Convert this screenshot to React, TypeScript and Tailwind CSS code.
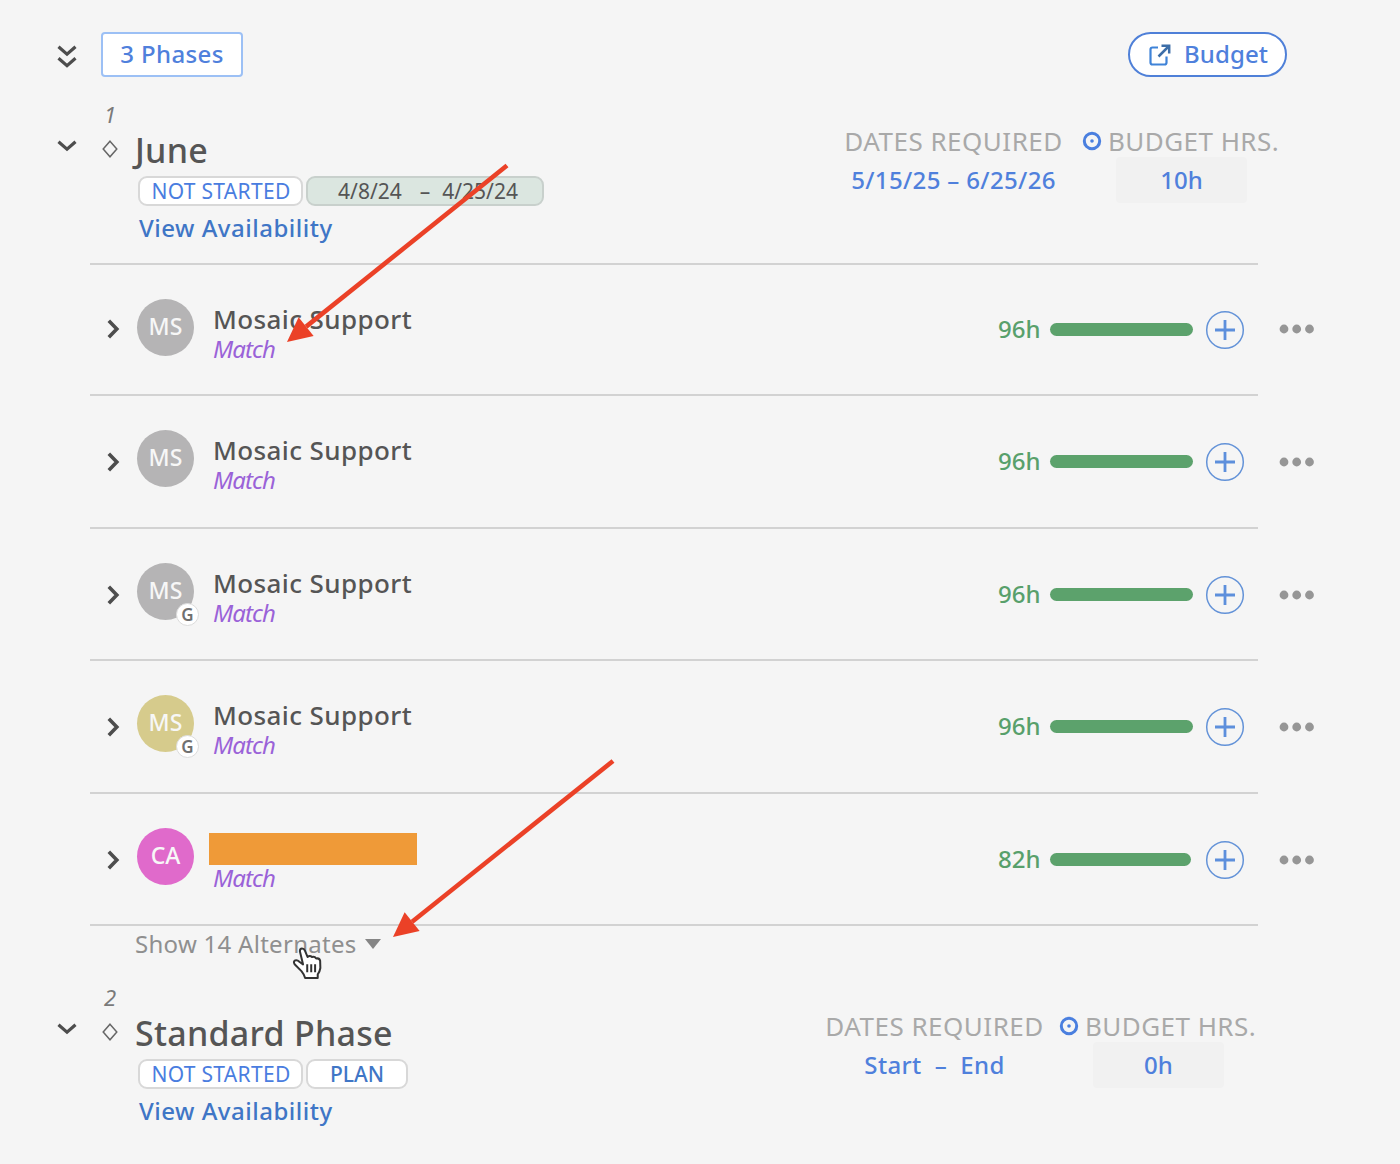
import { useState } from "react";

interface Member {
  id: number;
  initials: string;
  name: string | null;
  avatar: string;
  guest: boolean;
  hours: number;
  barWidth: number;
  height: string;
}

const members: Member[] = [
  { id: 1, initials: "MS", name: "Mosaic Support", avatar: "bg-[#b5b4b5]", guest: false, hours: 96, barWidth: 143, height: "h-[131px]" },
  { id: 2, initials: "MS", name: "Mosaic Support", avatar: "bg-[#b5b4b5]", guest: false, hours: 96, barWidth: 143, height: "h-[133px]" },
  { id: 3, initials: "MS", name: "Mosaic Support", avatar: "bg-[#b5b4b5]", guest: true, hours: 96, barWidth: 143, height: "h-[132px]" },
  { id: 4, initials: "MS", name: "Mosaic Support", avatar: "bg-[#d6cb8c]", guest: true, hours: 96, barWidth: 143, height: "h-[133px]" },
  { id: 5, initials: "CA", name: null, avatar: "bg-[#e06acb]", guest: false, hours: 82, barWidth: 141, height: "h-[132px]" },
];

function ChevronDown() {
  return (
    <svg width="20" height="12" viewBox="0 0 20 12" fill="none" stroke="#4d4d4d" strokeWidth="3.2">
      <path d="M1.5 1.8 L10 9.2 L18.5 1.8" />
    </svg>
  );
}

function ChevronRight() {
  return (
    <svg width="13" height="20" viewBox="0 0 13 20" fill="none" stroke="#4d4d4d" strokeWidth="3.6">
      <path d="M1.8 1.8 L9.8 10 L1.8 18.2" />
    </svg>
  );
}

function Diamond() {
  return (
    <svg width="16" height="18" viewBox="0 0 16 18" fill="none" stroke="#666" strokeWidth="1.5">
      <path d="M8 1.2 L14.8 9 L8 16.8 L1.2 9 Z" />
    </svg>
  );
}

function PlusCircle() {
  return (
    <svg className="mt-px" width="40" height="40" viewBox="0 0 40 40" fill="none">
      <circle cx="20" cy="20" r="18.3" stroke="#6493d8" strokeWidth="1.5" />
      <path d="M20 10 V30 M10 20 H30" stroke="#5d8fdc" strokeWidth="2.8" />
    </svg>
  );
}

function MemberRow({ member, first }: { member: Member; first: boolean }) {
  return (
    <div className={`flex ${member.height}`}>
      <div className="flex w-[1168px] items-start border-b-2 border-[#d2d2d2]">
        <div className={`w-[47px] pl-[17px] ${first ? "pt-[54px]" : "pt-[56px]"}`}>
          <ChevronRight />
        </div>
        <div className="relative mt-[34px] h-[57px] w-[57px]">
          <div className={`flex h-[57px] w-[57px] items-center justify-center rounded-full pb-[2px] text-[23px] font-medium text-[#f7f7f7] ${member.avatar}`}>
            {member.initials}
          </div>
          {member.guest && (
            <span className="absolute top-[40px] left-[39px] flex h-[23px] w-[23px] items-center justify-center rounded-full border border-[#dcdcdc] bg-white text-[17px] font-semibold text-[#707070]">
              G
            </span>
          )}
        </div>
        <div className="ml-[19px] w-[600px] pt-[38px]">
          {member.name ? (
            <div className="h-[32px] text-[26px] leading-[32px] font-medium tracking-[0.4px] text-[#555]">{member.name}</div>
          ) : (
            <div className="mt-px -mb-px -ml-[4px] h-[32px] w-[208px] bg-[#ef9a38]" />
          )}
          <div className="text-[24px] leading-[28px] tracking-[-0.9px] text-[#9a62d8] italic">Match</div>
        </div>
        <div className={`flex flex-1 items-center ${first ? "pt-[44px]" : "pt-[45px]"}`}>
          <span className="ml-[185px] w-[52px] pb-[2px] text-[24px] leading-[38px] font-medium text-[#58a06b]">{member.hours}h</span>
          <div className="w-[155px]">
            <div className="h-[13px] rounded-full bg-[#5ca26c]" style={{ width: member.barWidth }} />
          </div>
          <PlusCircle />
        </div>
      </div>
      <svg className={`ml-[21px] ${first ? "mt-[58px]" : "mt-[60px]"}`} width="36" height="12" viewBox="0 0 36 12" fill="#969696">
        <circle cx="5" cy="6" r="4.4" />
        <circle cx="17.7" cy="6" r="4.4" />
        <circle cx="30.5" cy="6" r="4.4" />
      </svg>
    </div>
  );
}

interface PhaseProps {
  index: number;
  name: string;
  plan: React.ReactNode;
  dates: string;
  budget: string;
  shift: string;
  budgetGap: string;
}

function PhaseHeader({ index, name, plan, dates, budget, shift, budgetGap }: PhaseProps) {
  return (
    <div className="flex h-[163px] items-start">
      <div className="w-[44px] pt-[40px]">
        <ChevronDown />
      </div>
      <div className="w-[34px]">
        <div className="pl-[3px] text-[22px] leading-[28px] text-[#7a7a7a] italic">{index}</div>
        <div className="mt-[12px] pl-px">
          <Diamond />
        </div>
      </div>
      <div className="w-[600px] pt-[30px]">
        <h2 className="text-[34px] leading-[40px] font-medium tracking-[0.25px] text-[#555]">{name}</h2>
        <div className="mt-[6px] ml-[3px] flex gap-[3px] text-[21px]">
          <span className="flex h-[30px] w-[165px] items-center justify-center rounded-[9px] border-2 border-[#d8d8d8] bg-white pt-[2px] pl-px tracking-[0.3px] text-[#4a7de0]">
            NOT STARTED
          </span>
          {plan}
        </div>
        <a className="ml-[4px] block text-[24px] leading-[44px] font-medium tracking-[0.5px] text-[#3f76c6]">View Availability</a>
      </div>
      <div className={`flex ${shift}`}>
        <div className="w-[219px] text-center">
          <div className="text-[26px] leading-[32px] tracking-[0.5px] whitespace-nowrap text-[#a9a9a9]">DATES REQUIRED</div>
          <div className="text-[24px] leading-[46px] font-medium tracking-[0.35px] whitespace-pre text-[#4f80dc]">{dates}</div>
        </div>
        <div className={budgetGap}>
          <div className="flex items-center gap-[6px] text-[26px] leading-[32px] tracking-[0.45px] whitespace-nowrap text-[#a9a9a9]">
            <svg width="20" height="20" viewBox="0 0 20 20" fill="none">
              <circle cx="10" cy="10" r="7.7" stroke="#4a7fdf" strokeWidth="3" />
              <circle cx="10" cy="10" r="1.8" fill="#4a7fdf" />
            </svg>
            BUDGET HRS.
          </div>
          <div className="ml-[34px] h-[46px] w-[131px] rounded bg-[#f1f1f1] text-center text-[24px] leading-[46px] font-medium text-[#4f80dc]">
            {budget}
          </div>
        </div>
      </div>
    </div>
  );
}

function Arrow({ x1, y1, x2, y2 }: { x1: number; y1: number; x2: number; y2: number }) {
  // unit vector along the shaft, used to place the arrow head
  const len = Math.hypot(x2 - x1, y2 - y1);
  const ux = (x2 - x1) / len;
  const uy = (y2 - y1) / len;
  const bx = x2 - ux * 24.5;
  const by = y2 - uy * 24.5;
  return (
    <g>
      <line x1={x1} y1={y1} x2={bx} y2={by} stroke="#eb4127" strokeWidth="4.6" />
      <polygon
        points={`${x2},${y2} ${bx - uy * 12},${by + ux * 12} ${bx + uy * 12},${by - ux * 12}`}
        fill="#eb4127"
      />
    </g>
  );
}

export default function App() {
  const [phases] = useState(3);

  return (
    <div className="relative h-[1164px] w-[1400px] overflow-hidden bg-[#f5f5f5] pl-[57px] font-['Noto_Sans','Open_Sans',sans-serif]">
      <div className="flex h-[100px] items-start pt-[32px]">
        <svg className="mt-[13px]" width="20" height="24" viewBox="0 0 20 24" fill="none" stroke="#4d4d4d" strokeWidth="3.2">
          <path d="M1.5 1.8 L10 9.2 L18.5 1.8 M1.5 13.3 L10 20.7 L18.5 13.3" />
        </svg>
        <button className="ml-[24px] h-[45px] w-[142px] rounded-[4px] border-2 border-[#9cc0f5] bg-white pb-px text-[24px] leading-[38px] font-medium tracking-[0.4px] text-[#4f80dc]">
          {phases} Phases
        </button>
        <button className="ml-[885px] flex h-[45px] w-[159px] items-center rounded-full border-2 border-[#4f80d8] bg-white pl-[19px] text-[24px] leading-[38px] font-medium tracking-[0.1px] text-[#4f80dc]">
          <svg className="mr-[13px]" width="22" height="22" viewBox="0 0 22 22" fill="none" stroke="#3f83d8" strokeWidth="2.2">
            <path d="M9 3.5 H3.5 Q1.5 3.5 1.5 5.5 V18.5 Q1.5 20.5 3.5 20.5 H15.5 Q17.5 20.5 17.5 18.5 V12.5" />
            <path d="M9.5 12.5 L19.5 2.5 M12.5 1.8 H20.2 V9.5" stroke="#3d6ea8" strokeWidth="2.5" />
          </svg>
          <span className="pb-px">Budget</span>
        </button>
      </div>

      <PhaseHeader
        index={1}
        name="June"
        plan={
          <span className="flex h-[30px] w-[238px] items-center justify-center gap-[18px] rounded-[9px] border-2 border-[#c8d0cc] bg-[#dbe6e0] pt-[2px] pl-[6px] text-[#555]">
            4/8/24 <span className="-mr-[6px]">–</span> 4/25/24
          </span>
        }
        dates="5/15/25 – 6/25/26"
        budget="10h"
        shift="ml-[109px] pt-[25px]"
        budgetGap="ml-[19px]"
      />

      <div className="ml-[33px]">
        <div className="h-[2px] w-[1168px] bg-[#d2d2d2]" />
        {members.map((m, i) => (
          <MemberRow key={m.id} member={m} first={i === 0} />
        ))}
      </div>

      <div className="flex h-[57px] items-start gap-[8px] pl-[78px] text-[24px] leading-[36px] tracking-[0.28px] text-[#8f8f8f]">
        Show 14 Alternates
        <svg className="mt-[13px]" width="16" height="10" viewBox="0 0 16 10" fill="#858585">
          <path d="M0 0 H16 L8 10 Z" />
        </svg>
      </div>

      <PhaseHeader
        index={2}
        name="Standard Phase"
        plan={
          <span className="flex h-[30px] w-[102px] items-center justify-center rounded-[9px] border-2 border-[#d8d8d8] bg-white pt-[2px] font-medium text-[#3f76c6]">
            PLAN
          </span>
        }
        dates="Start  –  End"
        budget="0h"
        shift="ml-[90px] pt-[27px]"
        budgetGap="ml-[15px]"
      />

      <svg className="pointer-events-none absolute inset-0" width="1400" height="1164" viewBox="0 0 1400 1164">
        <Arrow x1={507} y1={165.5} x2={287} y2={342} />
        <Arrow x1={613} y1={761} x2={393} y2={937} />
        {/* hand cursor over the alternates toggle */}
        <g transform="translate(292 947) scale(1.05)" stroke="#333" strokeWidth="1.9" strokeLinejoin="round">
          <path
            d="M7.5 4 Q7.5 1.5 9.5 1.5 Q11.5 1.5 12.3 3.5 L14.8 9.5 Q17 7.5 19 9.5 Q21.5 8.5 23 11 Q26 10.2 26.8 13 L27 20 Q26.5 23.5 24.5 26 V29.5 H12.5 Q11.5 26 9 23 L2.5 16.5 Q1 14 3 12.8 Q5 12 7 14 L10.5 16.5 Z"
            fill="#fff"
          />
          <path d="M14.5 16.5 V24 M18.3 16.5 V24 M22 16.5 V24" fill="none" />
        </g>
      </svg>
    </div>
  );
}
